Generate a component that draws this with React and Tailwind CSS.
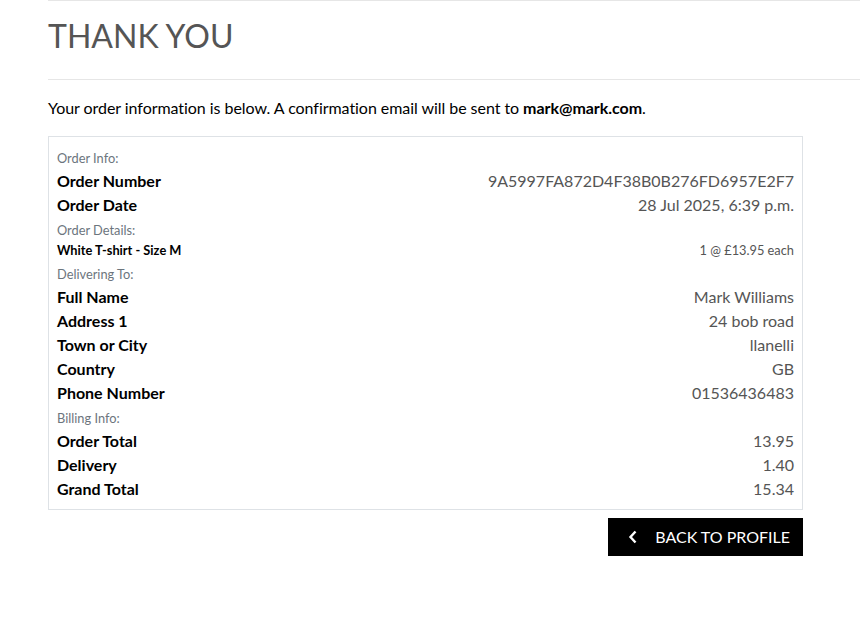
export default function App() {
  const Label = ({ children }) => (
    <div className="h-6 leading-6">
      <span className="text-[12.8px] text-[#6c757d]">{children}</span>
    </div>
  );

  const Row = ({ label, value }) => (
    <div className="flex justify-between leading-6">
      <p className="font-bold text-black">{label}</p>
      <p className="text-[#555]">{value}</p>
    </div>
  );

  return (
    <div className="min-h-screen bg-white font-['Lato','Liberation_Sans',sans-serif] text-[16px] text-[#555] leading-6">
      <div className="pl-12">
        <hr className="border-t border-[#e6e6e6] mb-4" />
        <h2 className="text-[32px] leading-[1.2] text-[#555] uppercase">Thank You</h2>
        <hr className="border-t border-[#e6e6e6] mt-6 mb-4" />
        <p className="text-black tracking-[-0.05px]">
          Your order information is below. A confirmation email will be sent to{" "}
          <strong>mark@mark.com</strong>.
        </p>

        <div className="w-[755px] mt-4">
          <div className="border border-[#dee2e6] p-2">
            <Label>Order Info:</Label>
            <Row label="Order Number" value="9A5997FA872D4F38B0B276FD6957E2F7" />
            <Row label="Order Date" value="28 Jul 2025, 6:39 p.m." />

            <Label>Order Details:</Label>
            <div className="flex justify-between text-[12.8px] leading-[1.5]">
              <p className="font-bold text-black">White T-shirt - Size M</p>
              <p className="text-[#555]">1 @ £13.95 each</p>
            </div>

            <Label>Delivering To:</Label>
            <Row label="Full Name" value="Mark Williams" />
            <Row label="Address 1" value="24 bob road" />
            <Row label="Town or City" value="llanelli" />
            <Row label="Country" value="GB" />
            <Row label="Phone Number" value="01536436483" />

            <Label>Billing Info:</Label>
            <Row label="Order Total" value="13.95" />
            <Row label="Delivery" value="1.40" />
            <Row label="Grand Total" value="15.34" />
          </div>

          <div className="flex justify-end mt-2">
            <button className="flex items-center bg-black border border-black text-white px-3 py-[6px] leading-6">
              <span className="inline-flex items-center justify-center w-6 h-6 mr-2">
                <svg width="10" height="14" viewBox="0 0 10 14" fill="none">
                  <path d="M7.5 1.5 L2.5 7 L7.5 12.5" stroke="white" strokeWidth="2.4" strokeLinecap="butt" strokeLinejoin="miter" />
                </svg>
              </span>
              <span className="ml-0.5 uppercase">Back to Profile</span>
            </button>
          </div>
        </div>
      </div>
    </div>
  );
}
